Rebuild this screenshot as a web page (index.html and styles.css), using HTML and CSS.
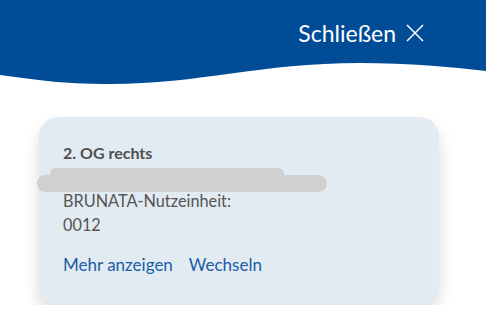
FILE: index.html
```html
<!DOCTYPE html>
<html lang="de">
<head>
  <meta charset="utf-8" />
  <title>Nutzeinheit</title>
  <meta name="viewport" content="width=device-width, initial-scale=1.0">
  <link rel="stylesheet" href="styles.css">
</head>
<body>
  <div class="header-bar">
    <a href="#" class="close-btn">Schließen
      <svg class="close-icon" width="18" height="18" viewBox="0 0 18 18"><path d="M1 1L17 17M17 1L1 17" stroke="#fff" stroke-width="1.5" fill="none"/></svg>
    </a>
  </div>
  <svg class="wave" width="486" height="22" viewBox="0 0 486 22" preserveAspectRatio="none">
    <path d="M0 0H486V8C450 4 410 0 360 0C260 0 200 21 110 21C60 21 30 16 0 12Z" fill="#004c97"/>
  </svg>

  <div class="content">
    <div class="unit-card">
      <div class="unit-title">2. OG rechts</div>
      <div class="redacted">
        <div class="bar bar-top"></div>
        <div class="bar bar-bottom"></div>
      </div>
      <div class="unit-label">BRUNATA-Nutzeinheit:</div>
      <div class="unit-number">0012</div>
      <div class="unit-links">
        <a href="#">Mehr anzeigen</a>
        <a href="#">Wechseln</a>
      </div>
    </div>
  </div>
</body>
</html>
```
FILE: styles.css
```css
body {
  margin: 0;
  font-family: Lato, "Open Sans", sans-serif;
  color: #555;
  background: #fff;
}
.header-bar {
  height: 63px;
  background: #004c97;
  display: flex;
  justify-content: flex-end;
  align-items: center;
  padding-right: 62px;
  box-sizing: border-box;
}
.close-btn {
  color: #fff;
  text-decoration: none;
  font-size: 23px;
  display: flex;
  align-items: center;
  gap: 10px;
  margin-top: 2px;
}
.wave {
  display: block;
}
.content {
  padding: 32px 47px 0 39px;
}
.unit-card {
  background: #e2eaf2;
  border-radius: 20px;
  padding: 26px 24px 30px;
  height: 188px;
  box-sizing: border-box;
  box-shadow: 0 9px 16px rgba(0,0,0,0.15);
}
.unit-title {
  font-size: 16px;
  font-weight: bold;
  color: #505050;
  line-height: 20px;
}
.redacted {
  height: 26px;
  padding-top: 5px;
  box-sizing: border-box;
}
.bar {
  background: #d0d0d0;
}
.bar-top {
  margin-left: -13px;
  width: 234px;
  height: 10px;
  border-radius: 6px 6px 0 0;
}
.bar-bottom {
  margin-left: -26px;
  margin-top: -3px;
  width: 290px;
  height: 17px;
  border-radius: 9px;
}
.unit-label, .unit-number {
  font-size: 16.3px;
  line-height: 24px;
}
.unit-links {
  margin-top: 17px;
  display: flex;
  gap: 16px;
}
.unit-links a {
  color: #1a5ea8;
  text-decoration: none;
  font-size: 17px;
}
```
